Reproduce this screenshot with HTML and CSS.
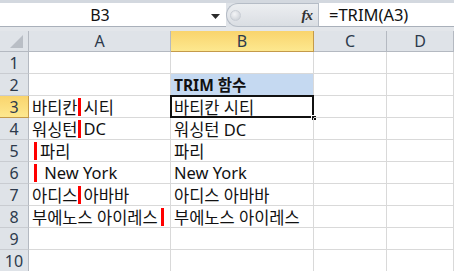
FILE: index.html
```html
<!DOCTYPE html>
<html lang="ko">
<head>
<meta charset="utf-8">
<link rel="stylesheet" href="styles.css">
</head>
<body>
<div class="app">
  <div class="fbar">
    <div class="namebox">
      <span class="namebox-text">B3</span>
      <svg class="dd" width="9" height="5" viewBox="0 0 9 5"><path d="M0 0H9L4.5 5Z" fill="#2b2b2b"/></svg>
    </div>
    <div class="pill">
      <span class="knob"></span>
      <span class="fx">fx</span>
    </div>
    <div class="formula">=TRIM(A3)</div>
  </div>
  <div class="sheet">
    <div class="corner"><span class="tri"></span></div>
    <div class="ch">A</div>
    <div class="ch sel">B</div>
    <div class="ch">C</div>
    <div class="ch">D</div>

    <div class="rh">1</div><div class="c"></div><div class="c"></div><div class="c"></div><div class="c"></div>
    <div class="rh">2</div><div class="c"></div><div class="c hdr">TRIM 함수</div><div class="c"></div><div class="c"></div>
    <div class="rh sel">3</div><div class="c">바티칸<span class="bar"></span>시티</div><div class="c active">바티칸 시티<span class="handle"></span></div><div class="c"></div><div class="c"></div>
    <div class="rh">4</div><div class="c">워싱턴<span class="bar"></span>DC</div><div class="c">워싱턴 DC</div><div class="c"></div><div class="c"></div>
    <div class="rh">5</div><div class="c"><span class="bar lead"></span>파리</div><div class="c">파리</div><div class="c"></div><div class="c"></div>
    <div class="rh">6</div><div class="c"><span class="bar lead"></span> New York</div><div class="c">New York</div><div class="c"></div><div class="c"></div>
    <div class="rh">7</div><div class="c">아디스<span class="bar"></span>아바바</div><div class="c">아디스 아바바</div><div class="c"></div><div class="c"></div>
    <div class="rh">8</div><div class="c">부에노스 아이레스<span class="bar end"></span></div><div class="c">부에노스 아이레스</div><div class="c"></div><div class="c"></div>
    <div class="rh">9</div><div class="c"></div><div class="c"></div><div class="c"></div><div class="c"></div>
    <div class="rh">10</div><div class="c"></div><div class="c"></div><div class="c"></div><div class="c"></div>
  </div>
</div>
</body>
</html>
```
FILE: styles.css
```css
* { box-sizing: border-box; }
html, body { margin: 0; padding: 0; background: #fff; }
body { width: 454px; height: 271px; overflow: hidden; font-family: "Noto Sans", "Noto Sans CJK KR", sans-serif; }

.app { display: flex; flex-direction: column; }

.fbar {
  display: flex;
  height: 31px;
  background: #dfe3e8;
  border-top: 3px solid #d3d8df;
  border-bottom: 4px solid #e3e6ea;
}
.namebox {
  width: 226px;
  background: #fff;
  position: relative;
  display: flex;
  align-items: center;
  justify-content: center;
  border-bottom: 1px solid #a9b0ba;
}
.namebox-text { font-size: 16px; color: #111; margin-left: -26px; }
.dd { position: absolute; right: 6px; top: 11px; }
.pill {
  width: 92px;
  background: linear-gradient(#eceef1, #dadee3);
  border: 1px solid #b5bcc6;
  border-right: none;
  border-radius: 12px 0 0 12px;
  display: flex;
  align-items: center;
  justify-content: space-between;
  padding: 0 6px 0 3px;
}
.knob {
  width: 11px; height: 11px; border-radius: 50%;
  background: radial-gradient(circle at 40% 35%, #f4f5f7, #c6cbd2);
  border: 1px solid #c9ced5;
}
.fx { font-family: "Liberation Serif", serif; font-style: italic; font-weight: bold; font-size: 15px; color: #333; letter-spacing: -1px; }
.formula {
  flex: 1;
  background: #fff;
  border-left: 1px solid #b5bcc6;
  border-bottom: 1px solid #a9b0ba;
  font-size: 16.5px;
  color: #111;
  padding-left: 10px;
  display: flex; align-items: center;
}

.sheet {
  display: grid;
  grid-template-columns: 29px 142px 143px 73px 1fr;
  grid-template-rows: 21px repeat(10, 22px);
}
.corner, .ch, .rh {
  background: #dfe3e8;
  color: #2d3a4c;
  font-size: 16px;
  display: flex; align-items: center; justify-content: center;
  border-right: 1px solid #b4b9c1;
  border-bottom: 1px solid #b4b9c1;
}
.rh { border-bottom-color: #c9ccd1; }
.corner { position: relative; }
.tri {
  position: absolute; right: 5px; bottom: 3px;
  width: 0; height: 0;
  border-left: 13px solid transparent;
  border-bottom: 13px solid #b9bec5;
}
.ch.sel, .rh.sel {
  background: linear-gradient(#f9d46d, #fde88f);
  border-right-color: #c49a4a;
  border-bottom-color: #c49a4a;
}
.c {
  border-right: 1px solid #d9d9d9;
  border-bottom: 1px solid #d9d9d9;
  font-size: 16.5px;
  color: #111;
  padding-left: 3px;
  display: flex; align-items: center;
  white-space: pre;
  position: relative;
  overflow: visible;
}
.c.hdr { background: #c5d9f1; font-weight: bold; font-size: 15.5px; }
.c.active { box-shadow: inset 0 0 0 2px #111; margin: -1px 0 0 -1px; padding-left: 4px; border: none; }
.handle {
  position: absolute; right: -3px; bottom: -3px;
  width: 6px; height: 6px; background: #111; border: 1px solid #fff;
}
.bar {
  display: inline-block;
  width: 3px; height: 18px;
  background: #f00;
  margin: 0 3px 0 0;
}
.bar.lead { margin-left: 2px; }
.bar.end { margin-left: 3px; }
```
